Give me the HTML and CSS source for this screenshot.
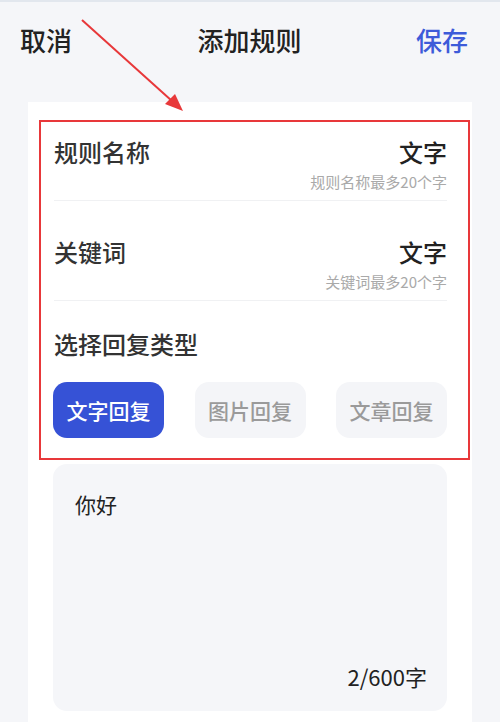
FILE: index.html
```html
<!DOCTYPE html>
<html lang="zh">
<head>
  <meta charset="UTF-8">
  <meta name="viewport" content="width=device-width, initial-scale=1.0">
  <title>添加规则</title>
  <link rel="stylesheet" href="styles.css">
</head>
<body>
  <header class="topbar">
    <span class="cancel">取消</span>
    <span class="title">添加规则</span>
    <span class="save">保存</span>
  </header>

  <main class="card">
    <section class="highlight">
      <div class="field">
        <span class="field-label">规则名称</span>
        <span class="field-value">文字</span>
        <span class="field-hint">规则名称最多20个字</span>
      </div>
      <div class="field">
        <span class="field-label">关键词</span>
        <span class="field-value">文字</span>
        <span class="field-hint">关键词最多20个字</span>
      </div>
      <div class="type-title">选择回复类型</div>
      <div class="type-options">
        <button class="type-btn active">文字回复</button>
        <button class="type-btn">图片回复</button>
        <button class="type-btn">文章回复</button>
      </div>
    </section>

    <div class="reply-box">
      <div class="reply-text">你好</div>
      <div class="reply-count">2/600字</div>
    </div>
  </main>

  <!-- annotation arrow drawn over the page -->
  <svg class="arrow" width="500" height="140" viewBox="0 0 500 140">
    <line x1="82" y1="18" x2="172" y2="99" stroke="#e8383a" stroke-width="2"/>
    <polygon points="183,109 165,102 175,92" fill="#e8383a"/>
  </svg>
</body>
</html>
```

FILE: styles.css
```css
body {
  margin: 0;
  border-top: 2px solid #e2e7ee;
  background-color: #f5f6f9;
  font-family: "Noto Sans CJK SC", "Noto Sans", sans-serif;
  color: #222;
  position: relative;
  height: 720px;
  overflow: hidden;
}

.topbar {
  display: grid;
  grid-template-columns: 1fr auto 1fr;
  align-items: center;
  height: 74px;
  padding: 0 32px 0 20px;
  font-size: 26px;
  font-weight: 500;
}

.title {
  margin-left: 11px;
  color: #222;
}

.cancel {
  color: #222;
}

.save {
  justify-self: end;
  color: #3d5bd9;
}

.card {
  margin: 26px 28px 0 28px;
  background-color: #fff;
  height: 620px;
  overflow: hidden;
  padding-top: 18px;
  box-sizing: border-box;
}

.highlight {
  margin: 0 2px 0 11px;
  padding: 14px 21px 20px 13px;
  border: 2px solid #e8383a;
}

.field {
  display: grid;
  grid-template-columns: 1fr auto;
  row-gap: 5px;
  padding-bottom: 9px;
  border-bottom: 1px solid #f0f1f3;
}

.field + .field {
  padding-top: 35px;
}

.field-label {
  font-size: 24px;
  font-weight: 500;
  line-height: 32px;
  color: #333;
}

.field-value {
  font-size: 24px;
  font-weight: 500;
  line-height: 32px;
  color: #222;
  text-align: right;
}

.field-hint {
  grid-column: 1 / 3;
  justify-self: end;
  font-size: 15px;
  line-height: 18px;
  color: #a9a9a9;
}

.type-title {
  padding-top: 27px;
  font-size: 24px;
  font-weight: 500;
  line-height: 32px;
  color: #333;
}

.type-options {
  display: flex;
  justify-content: space-between;
  margin-top: 22px;
  margin-left: -1px;
}

.type-btn {
  width: 111px;
  height: 56px;
  border: none;
  border-radius: 14px;
  background-color: #f4f5f8;
  color: #9a9a9a;
  font-family: inherit;
  font-size: 21px;
  font-weight: 500;
  padding: 0;
}

.type-btn.active {
  background-color: #3652d6;
  color: #fff;
}

.reply-box {
  display: flex;
  flex-direction: column;
  justify-content: space-between;
  margin: 4px 25px 0 25px;
  height: 247px;
  padding: 26px 20px 21px 22px;
  box-sizing: border-box;
  border-radius: 14px;
  background-color: #f5f6f9;
  font-size: 21px;
  color: #222;
}

.reply-text {
  line-height: 28px;
}

.reply-count {
  align-self: flex-end;
  font-size: 22px;
  line-height: 28px;
}

.arrow {
  position: absolute;
  left: 0;
  top: 0;
}
```
